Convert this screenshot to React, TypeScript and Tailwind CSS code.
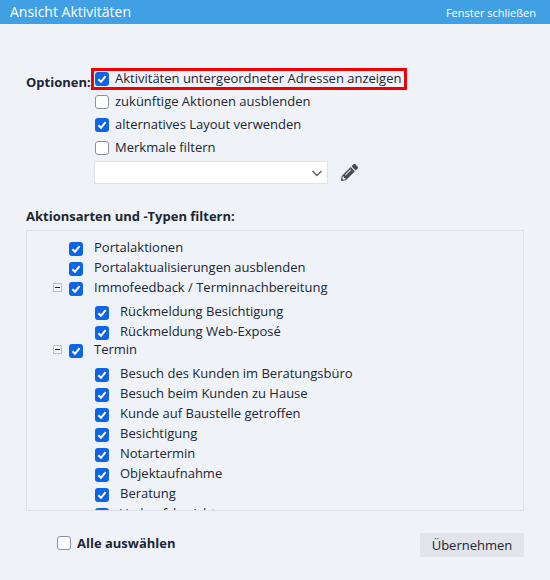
import React from "react";

const font = "font-['Open_Sans',sans-serif]";

function Box({ checked, className = "" }: { checked?: boolean; className?: string }) {
  if (checked) {
    return (
      <span className={"flex h-[14px] w-[14px] shrink-0 items-center justify-center rounded-[3px] bg-[#0d64e6] " + className}>
        <svg width="10" height="10" viewBox="0 0 10 10" fill="none">
          <path d="M1.4 5.2 L4 7.8 L8.6 2.2" stroke="#fff" strokeWidth="2" />
        </svg>
      </span>
    );
  }
  return <span className={"block h-[14px] w-[14px] shrink-0 rounded-[3px] border border-[#8f8f9d] bg-white " + className} />;
}

function Toggle() {
  return (
    <span className="flex h-[9px] w-[9px] items-center justify-center border border-[#b9bdc1] bg-[#f4f4f4]">
      <span className="block h-px w-[5px] bg-[#222]" />
    </span>
  );
}

function Option({ label, checked }: { label: string; checked?: boolean }) {
  return (
    <div className="flex h-[23px] items-center pl-[3px]">
      <Box checked={checked} />
      <span className="ml-[6px] text-[13px] leading-none text-[#212534]">{label}</span>
    </div>
  );
}

function TreeRow({ label, toggle, sub }: { label: string; toggle?: boolean; sub?: boolean }) {
  return (
    <div className={"flex h-[20px] items-center " + (sub ? "pl-[52px]" : "pl-[26px]")}>
      <span className="flex w-[16px] shrink-0 items-center">{toggle && !sub ? <Toggle /> : null}</span>
      <Box checked className="mt-[4px]" />
      <span className="ml-[11px] whitespace-nowrap text-[13px] leading-none text-[#212534]">{label}</span>
    </div>
  );
}

const sub1 = ["Rückmeldung Besichtigung", "Rückmeldung Web-Exposé"];
const sub2 = [
  "Besuch des Kunden im Beratungsbüro",
  "Besuch beim Kunden zu Hause",
  "Kunde auf Baustelle getroffen",
  "Besichtigung",
  "Notartermin",
  "Objektaufnahme",
  "Beratung",
  "Verkaufsbericht",
];

export default function App() {
  return (
    <div className={"flex h-[580px] w-[550px] flex-col overflow-hidden bg-[#eff3f7] " + font}>
      <header className="flex h-[24px] shrink-0 items-center justify-between bg-[#419fe3] pl-[10px] pr-[14px] text-white">
        <span className="text-[14px] leading-none">Ansicht Aktivitäten</span>
        <span className="text-[11px] leading-none">Fenster schließen</span>
      </header>

      <div className="flex pl-[26px] pt-[43px]">
        <span className="w-[66px] pt-[5px] text-[13px] font-bold leading-[20px] text-[#212534]">Optionen:</span>
        <div className="flex flex-col">
          <div className="relative flex h-[23px] items-center pl-[3px]">
            <span className="absolute -left-[1px] top-[1px] h-[22px] w-[316px] border-[3px] border-[#f00000]" />
            <Box checked />
            <span className="ml-[6px] text-[13px] leading-none text-[#212534]">Aktivitäten untergeordneter Adressen anzeigen</span>
          </div>
          <Option label="zukünftige Aktionen ausblenden" />
          <Option label="alternatives Layout verwenden" checked />
          <Option label="Merkmale filtern" />
          <div className="ml-[2px] mt-[2px] flex items-center">
            <div className="flex h-[23px] w-[234px] items-center justify-end border border-[#dee2e6] bg-white pr-[4px]">
              <svg width="12" height="12" viewBox="0 0 12 12" fill="none">
                <path d="M1.5 4 L6 8.5 L10.5 4" stroke="#5b6068" strokeWidth="1.4" />
              </svg>
            </div>
            <svg className="ml-[13px]" width="17" height="17" viewBox="0 0 512 512" fill="#494c50">
              <path d="M497.9 142.1l-46.1 46.1c-4.7 4.7-12.3 4.7-17 0l-111-111c-4.7-4.7-4.7-12.3 0-17l46.1-46.1c18.7-18.7 49.1-18.7 67.9 0l60.1 60.1c18.8 18.7 18.8 49.1 0 67.9zM284.2 99.8L21.6 362.4.4 483.9c-2.9 16.4 11.4 30.6 27.8 27.8l121.5-21.3 262.6-262.6c4.7-4.7 4.7-12.3 0-17l-111-111c-4.8-4.7-12.4-4.7-17.1 0zM124.1 339.9c-5.5-5.5-5.5-14.3 0-19.8l154-154c5.5-5.5 14.3-5.5 19.8 0s5.5 14.3 0 19.8l-154 154c-5.5 5.5-14.3 5.5-19.8 0zM88 424h48v36.3l-64.5 11.3-31.1-31.1L51.7 376H88v48z" />
            </svg>
          </div>
        </div>
      </div>

      <div className="pl-[26px] pt-[22px] text-[13px] font-bold leading-[20px] text-[#212534]">Aktionsarten und -Typen filtern:</div>

      <div className="mx-[26px] mt-[4px] h-[281px] shrink-0 overflow-hidden border border-[#dee2e6] pt-[6px]">
        <TreeRow label="Portalaktionen" />
        <TreeRow label="Portalaktualisierungen ausblenden" />
        <TreeRow label="Immofeedback / Terminnachbereitung" toggle />
        <div className="pt-[4px]">
          {sub1.map((s) => (
            <TreeRow key={s} label={s} sub />
          ))}
        </div>
        <div className="-mt-[2px]">
          <TreeRow label="Termin" toggle />
        </div>
        <div className="pt-[4px]">
          {sub2.map((s) => (
            <TreeRow key={s} label={s} sub />
          ))}
        </div>
      </div>

      <div className="flex items-start justify-between pl-[57px] pr-[26px] pt-[22px]">
        <div className="flex h-[20px] items-center">
          <Box />
          <span className="ml-[6px] text-[13px] font-bold leading-none text-[#212534]">Alle auswählen</span>
        </div>
        <button className="h-[24px] w-[104px] bg-[#e1e4e9] text-[13px] leading-none text-[#212534]">Übernehmen</button>
      </div>
    </div>
  );
}
